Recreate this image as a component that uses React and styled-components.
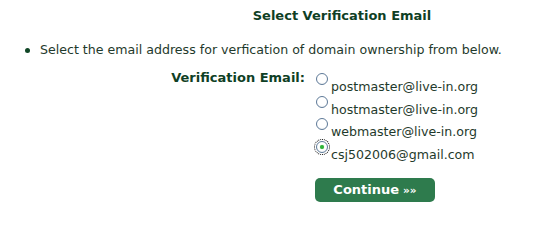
import React, { useState } from 'react';
import styled, { createGlobalStyle } from 'styled-components';

const GlobalStyle = createGlobalStyle`
  html, body {
    margin: 0;
    padding: 0;
    background: #ffffff;
  }
  body {
    font-family: 'DejaVu Sans', Verdana, sans-serif;
    font-size: 12.6px;
    color: #1f3a2c;
  }
`;

const Page = styled.div`
  width: 550px;
  height: 210px;
  overflow: hidden;
`;

const Title = styled.h3`
  margin: 0;
  padding: 7px 0 0 134px;
  height: 20px;
  line-height: 18px;
  text-align: center;
  font-size: 13px;
  font-weight: bold;
  color: #0f3f25;
`;

const Notes = styled.ul`
  margin: 15px 0 0;
  padding: 0 0 0 40px;
  list-style: none;
`;

const Note = styled.li`
  position: relative;
  line-height: 16px;

  &::before {
    content: '';
    position: absolute;
    left: -15px;
    top: 6px;
    width: 5px;
    height: 5px;
    border-radius: 50%;
    background: #104626;
  }
`;

const Form = styled.form`
  display: grid;
  grid-template-columns: 305px auto;
  column-gap: 10px;
  margin-top: 12px;
`;

const Label = styled.div`
  text-align: right;
  font-size: 13px;
  font-weight: bold;
  color: #0f3f25;
  line-height: 16px;
`;

const Options = styled.div`
  display: flex;
  flex-direction: column;
`;

const Option = styled.label`
  display: flex;
  align-items: flex-start;
  height: 22.7px;
  cursor: pointer;
`;

const Radio = styled.span`
  position: relative;
  flex: none;
  width: 12px;
  height: 12px;
  margin: 3px 3px 0 1px;
  border-radius: 50%;
  border: 1px solid #5e7a98;
  box-sizing: border-box;
  background: radial-gradient(circle at 50% 40%, #ffffff 55%, #e3e7ec 100%);
  outline: ${(p) => (p.$focused ? '1px dotted #000' : 'none')};
  outline-offset: 1px;

  &::after {
    content: '';
    display: ${(p) => (p.$checked ? 'block' : 'none')};
    position: absolute;
    left: 3px;
    top: 3px;
    width: 4px;
    height: 4px;
    border-radius: 50%;
    background: #2fb33a;
    box-shadow: 0 0 1px #6fd36f;
  }
`;

const OptionText = styled.span`
  padding-top: 9px;
  line-height: 15px;
  color: #1f3a2c;
`;

const Button = styled.button`
  margin-top: 17px;
  width: 120px;
  height: 24px;
  border: none;
  border-radius: 5px;
  background: #2e7b4d;
  color: #ffffff;
  font-family: 'DejaVu Sans', Verdana, sans-serif;
  font-size: 13px;
  font-weight: bold;
  padding: 0;
  cursor: pointer;
`;

const Arrows = styled.span`
  font-size: 10.5px;
  margin-left: 4px;
`;

const emails = [
  'postmaster@live-in.org',
  'hostmaster@live-in.org',
  'webmaster@live-in.org',
  'csj502006@gmail.com',
];

export default function App() {
  const [selected, setSelected] = useState(3);

  return (
    <Page>
      <GlobalStyle />
      <Title>Select Verification Email</Title>
      <Notes>
        <Note>Select the email address for verfication of domain ownership from below.</Note>
      </Notes>
      <Form onSubmit={(e) => e.preventDefault()}>
        <Label>Verification Email:</Label>
        <Options>
          {emails.map((email, i) => (
            <Option key={email} onClick={() => setSelected(i)}>
              <Radio $checked={selected === i} $focused={selected === i} />
              <OptionText>{email}</OptionText>
            </Option>
          ))}
          <div>
            <Button type="submit">
              Continue<Arrows>»»</Arrows>
            </Button>
          </div>
        </Options>
      </Form>
    </Page>
  );
}
